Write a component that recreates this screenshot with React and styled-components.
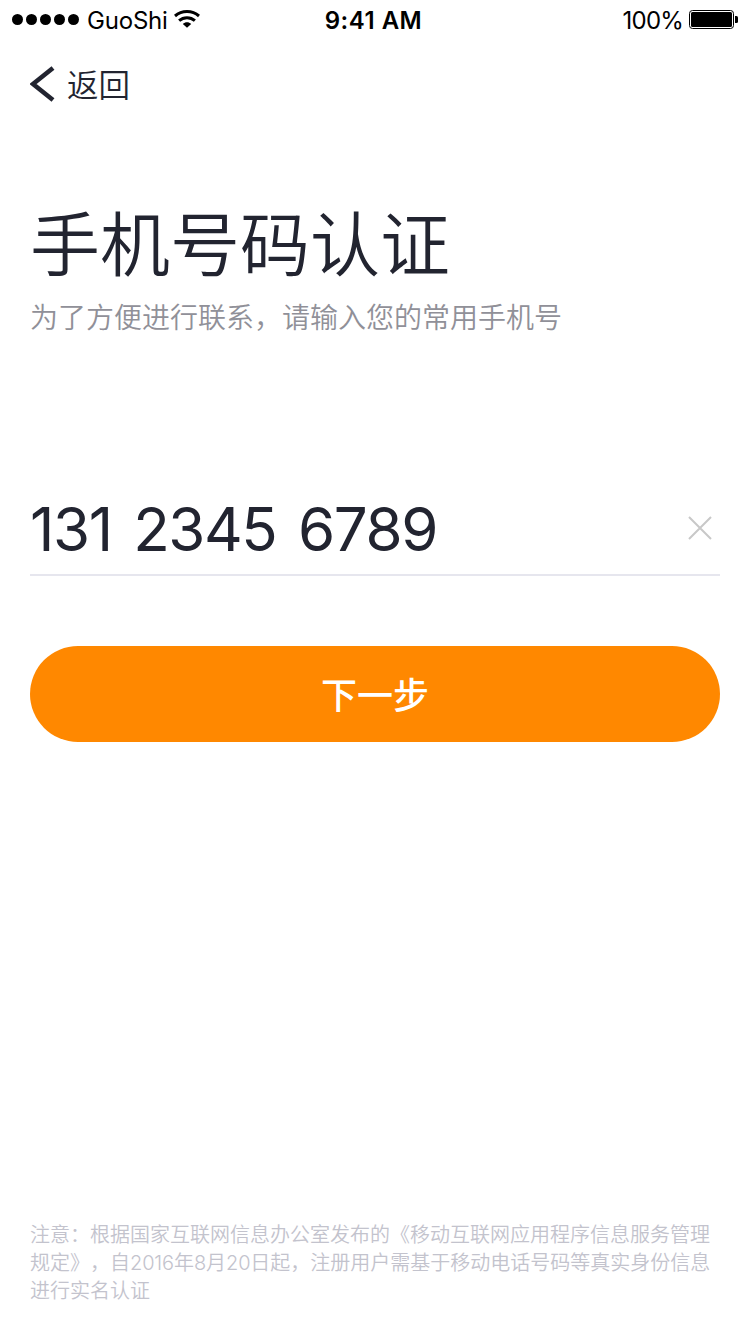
import React from 'react';
import styled, { createGlobalStyle } from 'styled-components';

const Global = createGlobalStyle`
  * { box-sizing: border-box; }
  body { margin: 0; background: #fff; font-family: Inter, "Noto Sans CJK SC", sans-serif; color: #222430; text-spacing-trim: space-all; }
  button { font: inherit; border: 0; padding: 0; background: none; color: inherit; }
`;
const Screen = styled.main`
  width: 750px; height: 1334px; display: flex; flex-direction: column; background: #fff; overflow: hidden;
`;
const StatusBar = styled.header`
  height: 40px; display: grid; grid-template-columns: 1fr auto 1fr; align-items: center;
  padding: 0 12px 0 12px; color: #000; font-size: 24px; line-height: 38px;
`;
const Carrier = styled.div`display: flex; align-items: center;`;
const Signal = styled.div`display: flex; gap: 3px; margin: 0 8px 1px 0;`;
const Dot = styled.i`width: 11px; height: 11px; border-radius: 50%; background: #000;`;
const Name = styled.span`padding-top: 2px; letter-spacing: -0.2px; margin-right: 6px;`;
const Time = styled.time`padding-top: 2px; margin-right: 3px; font-weight: 600; letter-spacing: 0.5px;`;
const Power = styled.div`display: flex; align-items: center; justify-content: flex-end; gap: 6px;`;
const Percent = styled.span`padding-top: 2px; letter-spacing: -0.8px;`;
const Battery = styled.svg`margin-bottom: 1px;`;
const Wifi = styled.svg`margin-bottom: 3px;`;
const Back = styled.button`
  align-self: flex-start; display: flex; align-items: center; height: 88px; margin-left: 30px; gap: 12px;
  font-size: 31.5px; line-height: 48px; font-weight: 350;
`;
const BackLabel = styled.span`padding-top: 3px;`;
const Title = styled.h1`margin: 68px 30px 0; font-size: 70px; line-height: 100px; font-weight: 350;`;
const Subtitle = styled.p`margin: 2px 30px 0; font-size: 28px; line-height: 40px; color: #909098; font-weight: 350;`;
const Field = styled.div`
  margin: 142px 30px 0; height: 96px; display: flex; align-items: center; justify-content: space-between;
  border-bottom: 2px solid #e6e6ee;
`;
const Phone = styled.span`
  padding-top: 3px; font-size: 60px; line-height: 72px; font-weight: 400; letter-spacing: -1.4px; word-spacing: 6px;
`;
const Clear = styled.button`display: flex; margin: 2px 8px 0 0;`;
const Next = styled.button`
  margin: 70px 30px 0; padding-top: 5px; height: 96px; flex: none; border-radius: 48px; background: #ff8800; color: #fff;
  font-size: 36px; font-weight: 500; line-height: 91px;
`;
const Notice = styled.footer`margin: auto 30px 29px; font-size: 20px; line-height: 28px; color: #c3c3cd; font-weight: 350;`;
const Line = styled.div`white-space: nowrap;`;
const Digits = styled.span`letter-spacing: -0.15px;`;

export default function App() {
  return (
    <Screen>
      <Global />
      <StatusBar>
        <Carrier>
          <Signal>{[0, 1, 2, 3, 4].map((n) => <Dot key={n} />)}</Signal>
          <Name>GuoShi</Name>
          <Wifi width="26" height="18" viewBox="0 0 26 18" fill="none" stroke="#000" strokeWidth="3">
            <path d="M1 6C7.8 .1 18.2 .1 25 6M5.1 10.7c4.5-4 11.3-4 15.8 0" />
            <path d="M13 17.7l-4.2-3.8c2.4-2.1 6-2.1 8.4 0z" fill="#000" stroke="none" />
          </Wifi>
        </Carrier>
        <Time>9:41 AM</Time>
        <Power>
          <Percent>100%</Percent>
          <Battery width="49" height="19" viewBox="0 0 49 19">
            <rect x=".5" y=".5" width="44" height="18" rx="3" fill="none" stroke="#000" />
            <rect x="2" y="2" width="41" height="15" rx="1.5" />
            <path d="M46 6h1.5q1.5 0 1.5 1.5v4q0 1.5-1.5 1.5H46z" />
          </Battery>
        </Power>
      </StatusBar>
      <Back>
        <svg width="25" height="36" viewBox="0 0 25 36" fill="none" stroke="#222430" strokeWidth="4.6"><path d="M23 2L3 18l20 16" /></svg>
        <BackLabel>返回</BackLabel>
      </Back>
      <Title>手机号码认证</Title>
      <Subtitle>为了方便进行联系，请输入您的常用手机号</Subtitle>
      <Field>
        <Phone>131 2345 6789</Phone>
        <Clear aria-label="清除">
          <svg width="24" height="24" viewBox="0 0 24 24" stroke="#c8c8c8" strokeWidth="2"><path d="M1 1l22 22M23 1L1 23" /></svg>
        </Clear>
      </Field>
      <Next>下一步</Next>
      <Notice>
        <Line>注意：根据国家互联网信息办公室发布的《移动互联网应用程序信息服务管理</Line>
        <Line>规定》，自<Digits>2016</Digits>年<Digits>8</Digits>月<Digits>20</Digits>日起，注册用户需基于移动电话号码等真实身份信息</Line>
        <Line>进行实名认证</Line>
      </Notice>
    </Screen>
  );
}
